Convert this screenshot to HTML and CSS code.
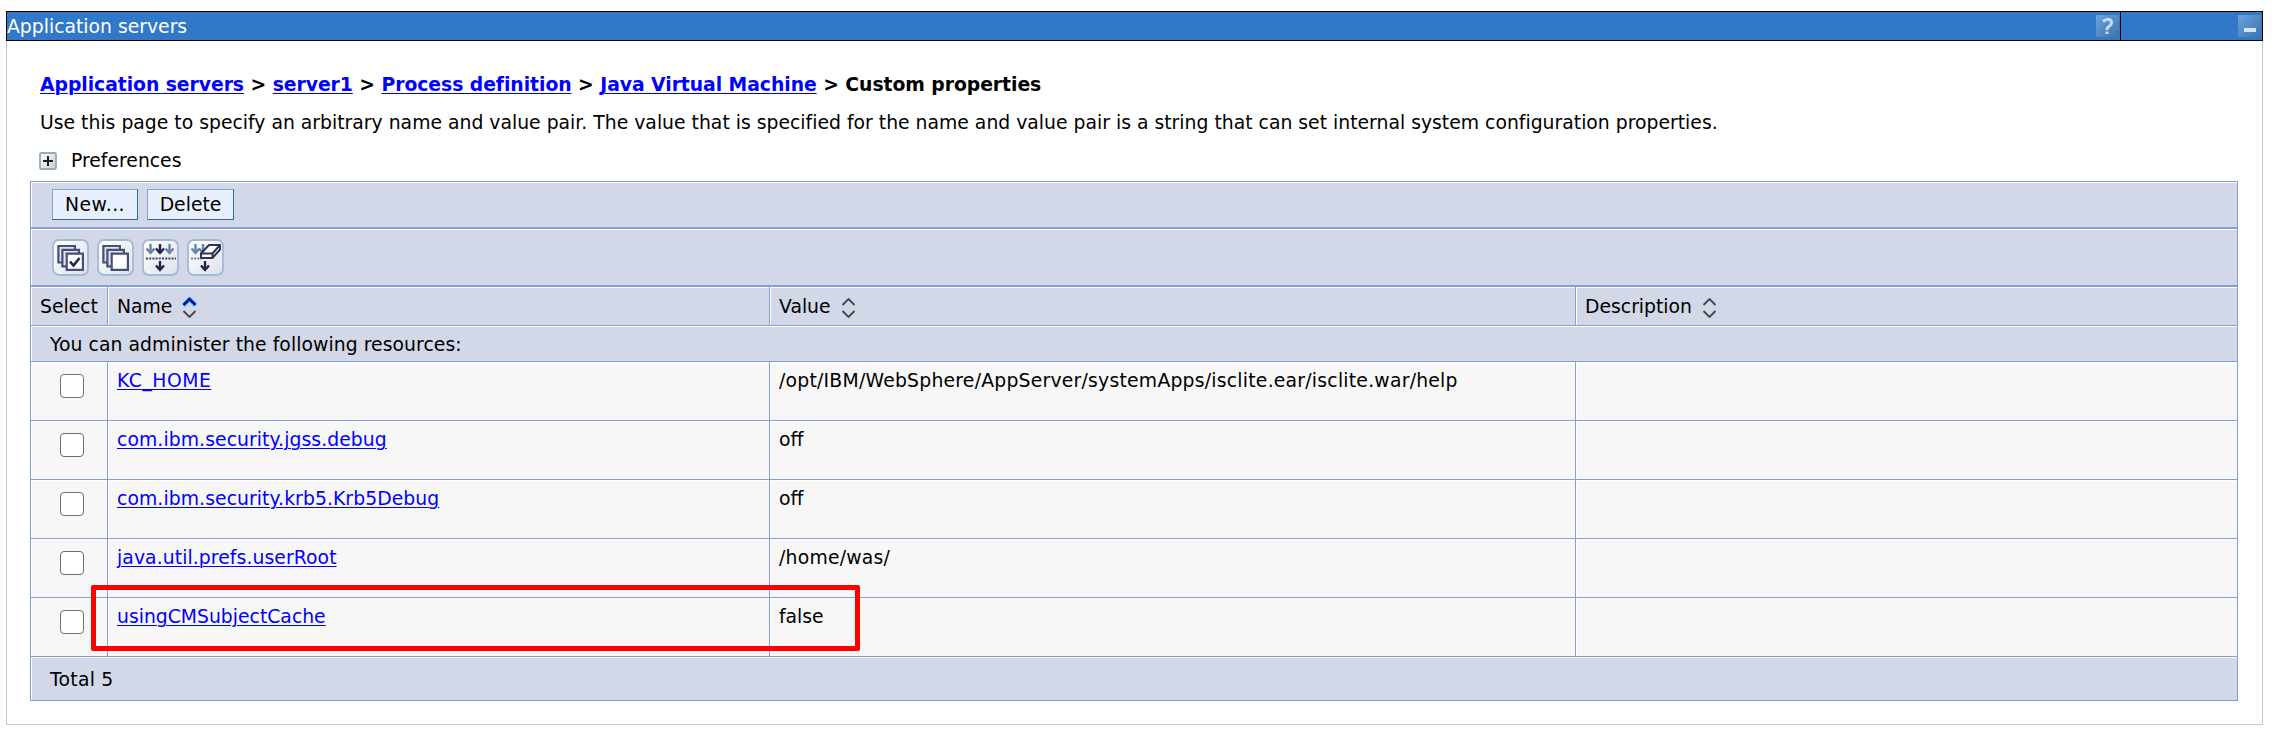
FILE: index.html
```html
<!DOCTYPE html>
<html lang="en">
<head>
<meta charset="utf-8">
<title>Application servers</title>
<link rel="stylesheet" href="styles.css">
</head>
<body>
<svg width="0" height="0" class="defs">
  <defs>
    <linearGradient id="face" x1="0" y1="0" x2="1" y2="1"><stop offset="0" stop-color="#fff"/><stop offset="1" stop-color="#dde1ea"/></linearGradient>
    <linearGradient id="chip" x1="0" y1="0" x2="1" y2="1"><stop offset="0" stop-color="#68a4df"/><stop offset="1" stop-color="#3e73a7"/></linearGradient>
    <linearGradient id="knob" x1="0" y1="0" x2="1" y2="1"><stop offset="0" stop-color="#fff"/><stop offset="1" stop-color="#d0cbc3"/></linearGradient>
    <symbol id="base" viewBox="0 0 37 37"><rect x="1" y="1" width="35" height="35" rx="6" fill="url(#face)" stroke="#a5b9d4" stroke-width="1.8"/></symbol>
    <symbol id="sheets" viewBox="0 0 37 37"><g fill="#e4e7f0" stroke="#454f78" stroke-width="2.2"><path d="M6.400 7h16.500v16.500h-16.500z"/><path d="M10.400 10.800h16.500v16.500h-16.500z"/><path d="M14.700 14.700h16.200v16.200h-16.200z" fill="#fff"/></g></symbol>
    <symbol id="arrow" viewBox="0 0 10 11"><path d="M5 0v9M1 4.500l4 4.500 4-4.500" fill="none" stroke="currentColor" stroke-width="2.4"/></symbol>
  </defs>
</svg>
<div class="portlet">
  <div class="titlebar">
    <div class="title"><span>Application servers</span>
      <svg class="chip" viewBox="0 0 23 22"><rect width="23" height="22" fill="url(#chip)"/><path d="M7 6.500Q11 3 14.500 5q2.500 3-1 6-2.500 1.500-2.500 4M11 16.500v2.500" fill="none" stroke="#c4daf0" stroke-width="3"/></svg>
    </div>
    <div class="controls">
      <svg class="chip" viewBox="0 0 23 22"><rect width="23" height="22" fill="url(#chip)"/><rect x="6" y="13" width="12" height="4" fill="#d4e3f3"/></svg>
    </div>
  </div>
  <div class="content">
    <h1 class="crumbs"><a href="#">Application servers</a> &gt; <a href="#">server1</a> &gt; <a href="#">Process definition</a> &gt; <a href="#">Java Virtual Machine</a> &gt; Custom properties</h1>
    <p class="intro">Use this page to specify an arbitrary name and value pair. The value that is specified for the name and value pair is a string that can set internal system configuration properties.</p>
    <div class="prefs">
      <svg width="18" height="18" viewBox="0 0 18 18"><rect x="1" y="1" width="16" height="16" rx="1.500" fill="url(#knob)" stroke="#8fabc8" stroke-width="1.800"/><path d="M4 9h10M9 4v10" stroke="#222" stroke-width="2"/></svg>
      <span>Preferences</span>
    </div>
    <div class="grid">
      <div class="bar buttons"><button class="btn new">New...</button><button class="btn del">Delete</button></div>
      <div class="bar icons">
        <svg class="ic" viewBox="0 0 37 37"><use href="#base"/><use href="#sheets"/><path d="M18 22.500l3.500 4 6-7.500" fill="none" stroke="#1d2747" stroke-width="2.600"/></svg>
        <svg class="ic" viewBox="0 0 37 37"><use href="#base"/><use href="#sheets"/></svg>
        <svg class="ic" viewBox="0 0 37 37"><use href="#base"/><g color="#6585aa"><use href="#arrow" x="3.500" y="5" width="10" height="11"/><use href="#arrow" x="22.500" y="5" width="10" height="11"/></g><g color="#1d2747"><use href="#arrow" x="13" y="5" width="10" height="11"/><use href="#arrow" x="13" y="22" width="10" height="11"/></g><path d="M4 19.500h30" stroke="#34466c" stroke-width="1.800" stroke-dasharray="2 1.200"/></svg>
        <svg class="ic" viewBox="0 0 37 37"><use href="#base"/><g color="#6585aa"><use href="#arrow" x="3.500" y="5" width="10" height="11"/><use href="#arrow" x="11" y="5" width="10" height="11"/></g><path d="M4 19.500h11" stroke="#6585aa" stroke-width="1.800" stroke-dasharray="2 1.200"/><g color="#1d2747"><use href="#arrow" x="13" y="22" width="10" height="11"/></g><path d="M14 14.500l8-8.500h11v4.500l-7.500 8.500H14zM14 14.500h11.500v4.500M25.500 14.500L33 6" fill="#fff" stroke="#2b3455" stroke-width="2" stroke-linejoin="round"/></svg>
      </div>
      <div class="row head">
        <div class="cell">Select</div>
        <div class="cell">Name <svg class="sort" viewBox="0 0 15 22"><path d="M1.500 8.500l6-6.500 6 6.500" stroke="#46d4ee" stroke-width="4.500"/><path d="M1.500 8l6-6 6 6" stroke="#0b0ba8" stroke-width="2.600"/><path d="M1.500 14l6 6 6-6" stroke="#444" stroke-width="1.800"/></svg></div>
        <div class="cell">Value <svg class="sort" viewBox="0 0 15 22"><path d="M1.500 8l6-6 6 6M1.500 14l6 6 6-6" stroke="#444" stroke-width="1.800"/></svg></div>
        <div class="cell">Description <svg class="sort" viewBox="0 0 15 22"><path d="M1.500 8l6-6 6 6M1.500 14l6 6 6-6" stroke="#444" stroke-width="1.800"/></svg></div>
      </div>
      <div class="bar sub">You can administer the following resources:</div>
      <div class="row"><div class="cell"><span class="check"></span></div><div class="cell caps"><a href="#">KC_HOME</a></div><div class="cell path">/opt/IBM/WebSphere/AppServer/systemApps/isclite.ear/isclite.war/help</div><div class="cell"></div></div>
      <div class="row"><div class="cell"><span class="check"></span></div><div class="cell key"><a href="#">com.ibm.security.jgss.debug</a></div><div class="cell">off</div><div class="cell"></div></div>
      <div class="row"><div class="cell"><span class="check"></span></div><div class="cell key"><a href="#">com.ibm.security.krb5.Krb5Debug</a></div><div class="cell">off</div><div class="cell"></div></div>
      <div class="row"><div class="cell"><span class="check"></span></div><div class="cell key"><a href="#">java.util.prefs.userRoot</a></div><div class="cell path">/home/was/</div><div class="cell"></div></div>
      <div class="row"><div class="cell"><span class="check"></span></div><div class="cell"><a href="#">usingCMSubjectCache</a></div><div class="cell">false</div><div class="cell"></div><div class="highlight"></div></div>
      <div class="bar total">Total 5</div>
    </div>
  </div>
</div>
</body>
</html>
```
FILE: styles.css
```css
* { box-sizing: border-box; }
body { margin: 0; background: #fff; color: #000; font: 18.8px/24px "DejaVu Sans", Verdana, sans-serif; white-space: nowrap; }
.defs { display: block; height: 0; }
a { color: #00f; text-decoration: underline; text-decoration-thickness: 1px; text-underline-offset: 2px; }
.portlet { margin: 11px 0 0 6px; width: 2257px; height: 714px; border: 1px solid #c8c8c8; border-top: 0; }
.titlebar { display: flex; margin: 0 -1px; height: 30px; border: 1px solid #000; background: #3178c8; color: #fff; }
.title { flex: 1; display: flex; justify-content: space-between; padding: 3px 1px 0 0; line-height: 23px; }
.controls { width: 142px; border-left: 1px solid #000; padding: 3px 1px 0 0; display: flex; justify-content: flex-end; }
.chip { width: 23px; height: 22px; }
.content { padding: 31px 24px 0 23px; }
.crumbs { margin: 0 0 0 10px; font-size: 18.8px; line-height: 26px; font-weight: bold; letter-spacing: -0.05px; }
.intro { margin: 12px 0 0 10px; line-height: 26px; letter-spacing: 0.01px; }
.prefs { display: flex; gap: 14px; margin: 12px 0 0 9px; height: 26px; line-height: 26px; }
.prefs svg { margin-top: 4px; }
.grid { margin-top: 7px; border: 1px solid #849fd6; }
.bar { background: #d2d8e8; border-bottom: 1px solid #849fd6; box-shadow: inset 1px 1px #fff; }
.buttons { height: 47px; border-bottom-width: 2px; padding: 7px 21px; display: flex; gap: 9px; }
.btn { height: 31px; border: 1px solid; border-color: #7fa5d2 #336699 #336699 #7fa5d2; background: #e8f0ff; font: inherit; padding: 1px 0 0; color: #000; }
.new { width: 86px; letter-spacing: 0.5px; }
.del { width: 87px; }
.icons { height: 58px; border-bottom-width: 2px; padding: 10px 21px; display: flex; gap: 8px; }
.ic { width: 37px; height: 37px; }
.row { display: grid; grid-template-columns: 76px 662px 806px 1fr; height: 59px; background: #f7f7f7; border-bottom: 1px solid #849fd6; position: relative; }
.cell { padding: 7px 0 0 9px; box-shadow: inset 1px 1px #fff; border-left: 1px solid #849fd6; }
.cell:first-child { border-left: 0; padding-left: 9px; }
.key { letter-spacing: 0.08px; }
.caps { letter-spacing: 0.5px; }
.path { letter-spacing: 0.23px; }
.head { height: 39px; background: #d2d8e8; }
.head .cell { padding-top: 8px; }
.sort { width: 15px; height: 22px; fill: none; vertical-align: -6px; margin-left: 4px; }
.check { display: block; width: 24px; height: 24px; margin: 5px 0 0 20px; border: 1px solid #6f6f6f; border-radius: 4px; background: #fff; }
.sub { height: 36px; padding: 7px 19px; letter-spacing: 0.06px; }
.total { height: 43px; padding: 11px 19px; border-bottom: 0; letter-spacing: 0.25px; }
.highlight { position: absolute; left: 60px; top: -13px; width: 769px; height: 66px; border: 5px solid #f00; border-radius: 2px; }
```
